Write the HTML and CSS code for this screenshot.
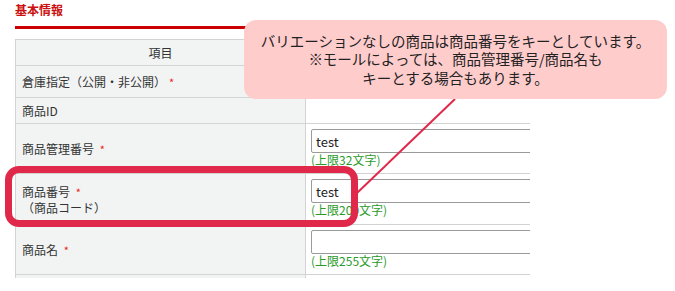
FILE: index.html
```html
<!DOCTYPE html>
<html lang="ja">
<head>
<meta charset="UTF-8">
<title>基本情報</title>
<link rel="stylesheet" href="styles.css">
</head>
<body>
<div class="page">
    <h2 class="section-title">基本情報</h2>
    <div class="table-wrap">
        <table class="info-table">
            <colgroup>
                <col class="col-label">
                <col class="col-value">
            </colgroup>
            <tr class="row-head">
                <th>項目</th>
                <th></th>
            </tr>
            <tr class="row-short">
                <td class="label">倉庫指定（公開・非公開）<span class="req">*</span></td>
                <td class="value"></td>
            </tr>
            <tr class="row-id">
                <td class="label">商品ID</td>
                <td class="value"></td>
            </tr>
            <tr class="row-field">
                <td class="label">商品管理番号 <span class="req">*</span></td>
                <td class="value">
                    <input class="text-input" type="text" value="test">
                    <div class="limit">(上限32文字)</div>
                </td>
            </tr>
            <tr class="row-field row-tall">
                <td class="label">商品番号 <span class="req">*</span><br>（商品コード）</td>
                <td class="value">
                    <input class="text-input" type="text" value="test">
                    <div class="limit">(上限200文字)</div>
                </td>
            </tr>
            <tr class="row-field">
                <td class="label">商品名 <span class="req">*</span></td>
                <td class="value">
                    <input class="text-input" type="text" value="">
                    <div class="limit">(上限255文字)</div>
                </td>
            </tr>
            <tr class="row-more">
                <td class="label"></td>
                <td class="value"></td>
            </tr>
        </table>
    </div>

    <!-- annotation overlay -->
    <div class="highlight"></div>
    <svg class="pointer" width="675" height="291">
        <line x1="455" y1="99" x2="357" y2="193" stroke="#e0294a" stroke-width="2"/>
    </svg>
    <div class="bubble">
        バリエーションなしの商品は商品番号をキーとしています。<br>
        ※モールによっては、商品管理番号/商品名も<br>
        キーとする場合もあります。
    </div>
</div>
</body>
</html>
```
FILE: styles.css
```css
/* page */
body {
    margin: 0;
    font-family: "Noto Sans CJK JP", "Noto Sans", sans-serif;
    color: #333;
    background: #fff;
}

.page {
    position: relative;
    width: 675px;
    height: 291px;
    overflow: hidden;
    padding-left: 15px;
    box-sizing: border-box;
}

.section-title {
    margin: 0;
    width: 515px;
    height: 24px;
    padding-top: 2px;
    font-size: 12px;
    font-weight: bold;
    line-height: 16px;
    color: #cc1111;
    border-bottom: 3px solid #cc0000;
}

.table-wrap {
    margin-top: 10px;
    width: 515px;
    height: 239px;
    overflow: hidden;
}

.info-table {
    border-collapse: collapse;
    table-layout: fixed;
    width: 560px;
    font-size: 12px;
}

.col-label { width: 290px; }
.col-value { width: 270px; }

.info-table th,
.info-table td {
    border: 1px solid #d3d3d3;
    padding: 0;
}

.info-table th {
    font-weight: normal;
    background: #f2f3f3;
}

.label {
    background: #f2f3f3;
    padding-left: 6px !important;
    line-height: 15px;
    vertical-align: middle;
}

.row-head { height: 26px; }
.row-short { height: 32px; }
.row-id { height: 26px; }
.row-field { height: 50px; }
.row-tall { height: 51px; }
.row-more { height: 20px; }

.req {
    color: #ee2222;
    font-size: 11px;
    margin-left: 3px;
}

.value {
    padding-left: 5px !important;
    vertical-align: top;
}

.text-input {
    display: block;
    margin-top: 5px;
    width: 300px;
    height: 24px;
    box-sizing: border-box;
    border: 1px solid #9a9a9a;
    border-radius: 2px;
    padding: 0 4px;
    font-family: "Noto Sans CJK JP", sans-serif;
    font-size: 13px;
    color: #222;
}

.limit {
    font-size: 12px;
    line-height: 14px;
    color: #2a9a2a;
}

/* annotation */
.highlight {
    position: absolute;
    left: 5px;
    top: 166px;
    width: 339px;
    height: 47px;
    border: 7px solid #e0294a;
    border-radius: 14px;
}

.pointer {
    position: absolute;
    left: 0;
    top: 0;
}

.bubble {
    position: absolute;
    left: 244px;
    top: 20px;
    width: 423px;
    height: 79px;
    display: flex;
    align-items: center;
    justify-content: center;
    text-align: center;
    background: #ffcccc;
    border-radius: 12px;
    font-size: 14.5px;
    line-height: 18.5px;
    color: #222;
}
```
